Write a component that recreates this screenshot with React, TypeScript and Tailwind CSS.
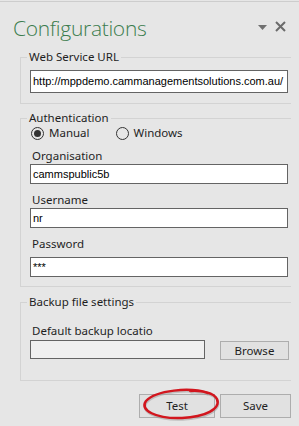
import React from "react";

const labelFont = "font-['Segoe_UI','Noto_Sans',sans-serif]";
const inputFont = "font-['Liberation_Sans',Arial,sans-serif]";

function Radio({ label, checked }: { label: string; checked?: boolean }) {
  return (
    <label className="flex items-center gap-[5px]">
      <span className="flex h-[13px] w-[13px] items-center justify-center rounded-full border border-[#333333] bg-[#e6e6e6]">
        {checked ? <span className="h-[7px] w-[7px] rounded-full bg-[#333333]" /> : null}
      </span>
      <span className="text-[11.5px] leading-[14px]">{label}</span>
    </label>
  );
}

function TextBox({ value, className = "" }: { value: string; className?: string }) {
  return (
    <div
      className={`flex items-center overflow-hidden whitespace-nowrap border border-[#646464] bg-white pl-[2px] text-[11px] text-black ${inputFont} ${className}`}
    >
      {value}
    </div>
  );
}

function Group({ title, children, className = "" }: { title: string; children: React.ReactNode; className?: string }) {
  return (
    <fieldset className={`w-[290px] border border-[#d3d3d3] pl-[9px] ${className}`}>
      <legend className="-ml-[3px] px-[2px] text-[11.5px] leading-[16px] text-[#1e1e1e]">{title}</legend>
      {children}
    </fieldset>
  );
}

export default function App() {
  return (
    <div className={`relative h-[426px] w-[299px] overflow-hidden bg-[#e6e6e6] text-[#1e1e1e] ${labelFont}`}>
      <div className="mt-px border-t border-[#cdcdcd]" />

      <div className="flex h-[47px] items-start justify-between pl-[13px] pr-[13px]">
        <h1 className="mt-[12px] font-['Open_Sans',sans-serif] text-[21px] font-light leading-[28px] tracking-[-0.3px] text-[#3c7d4e]">
          Configurations
        </h1>
        <div className="mt-[19px] flex items-center gap-[8px]">
          <svg width="9" height="5" viewBox="0 0 9 5" className="mt-[1px]">
            <path d="M0 0 H9 L4.5 5 Z" fill="#707070" />
          </svg>
          <svg width="11" height="11" viewBox="0 0 11 11">
            <path d="M1 1 L10 10 M10 1 L1 10" stroke="#6b6b6b" strokeWidth="2" />
          </svg>
        </div>
      </div>

      <div className="w-[291px] overflow-hidden pl-[20px]">
        <Group title="Web Service URL" className="pb-[10px]">
          <TextBox value="http://mppdemo.cammanagementsolutions.com.au/" className="mt-[5px] h-[23px] w-[258px]" />
        </Group>

        <Group title="Authentication" className="mt-[6px] pb-[9px]">
          <div className="flex h-[14px] items-center gap-[26px] pl-px">
            <Radio label="Manual" checked />
            <Radio label="Windows" />
          </div>
          <p className="mt-[8px] pl-[2px] text-[11.5px] leading-[16px]">Organisation</p>
          <TextBox value="cammspublic5b" className="h-[20px] w-[258px]" />
          <p className="mt-[8px] pl-[2px] text-[11.5px] leading-[16px]">Username</p>
          <TextBox value="nr" className="h-[20px] w-[258px]" />
          <p className="mt-[8px] pl-[2px] text-[11.5px] leading-[16px]">Password</p>
          <TextBox value="***" className="mt-[5px] h-[20px] w-[258px]" />
        </Group>

        <Group title="Backup file settings" className="mt-[7px] pb-[20px]">
          <p className="mt-[13px] pl-[2px] text-[11.5px] leading-[16px]">Default backup locatio</p>
          <div className="mt-px flex items-start gap-[15px]">
            <div className="h-[19px] w-[175px] border border-[#646464] bg-[#f0f0f0]" />
            <button className="mt-px h-[19px] w-[69px] border border-[#adadad] bg-[#e1e1e1] text-[11.5px] leading-[17px]">
              Browse
            </button>
          </div>
        </Group>

        <div className="mt-[13px] flex gap-[5px] pl-[119px]">
          <button className="h-[24px] w-[76px] border border-[#adadad] bg-[#e1e1e1] text-[11.5px] leading-[22px]">
            Test
          </button>
          <button className="h-[24px] w-[71px] border border-[#adadad] bg-[#e1e1e1] text-[11.5px] leading-[22px]">
            Save
          </button>
        </div>
      </div>

      <svg
        className="pointer-events-none absolute left-[138px] top-[386px]"
        width="86"
        height="38"
        viewBox="0 0 86 38"
      >
        <path
          d="M70 7 C52 1 18 4 8 15 C1 24 18 33 44 32 C67 31 83 23 79 13 C76 7 64 4 52 5"
          fill="none"
          stroke="#9a9a9a"
          strokeOpacity="0.5"
          strokeWidth="2.5"
          transform="translate(0.5 1.5)"
        />
        <path
          d="M70 7 C52 1 18 4 8 15 C1 24 18 33 44 32 C67 31 83 23 79 13 C76 7 64 4 52 5"
          fill="none"
          stroke="#d2161e"
          strokeWidth="2.5"
          strokeLinecap="round"
        />
      </svg>
    </div>
  );
}
